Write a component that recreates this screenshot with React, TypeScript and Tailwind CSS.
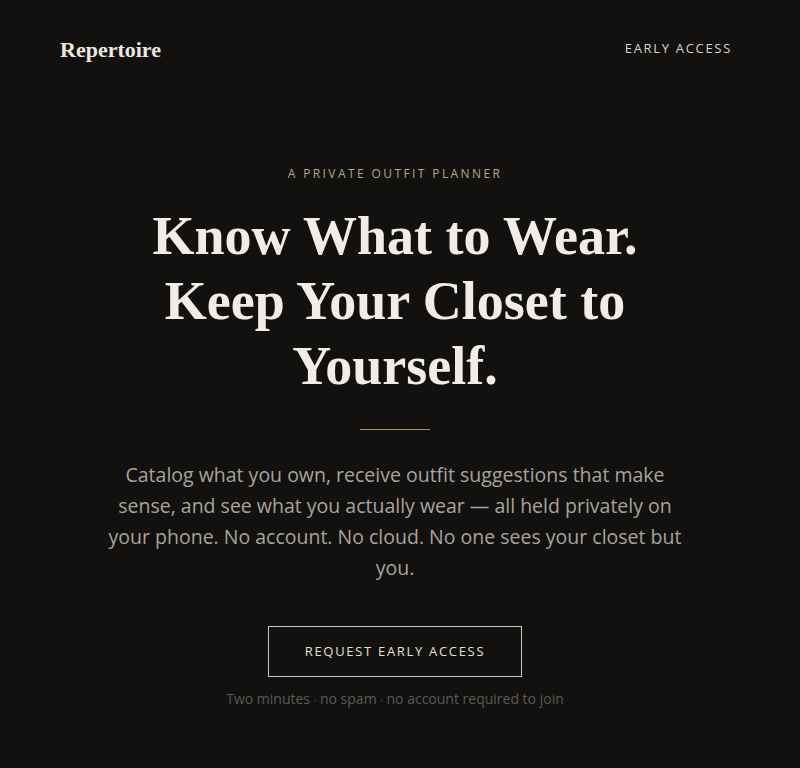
export default function App() {
  return (
    <div className="min-h-screen bg-[#121110] pr-[10px] font-['Open_Sans',sans-serif]">
      {/* Top bar */}
      <header className="flex h-[98px] items-center justify-between pl-[60px] pr-[58px]">
        <span className="font-['Liberation_Serif',serif] text-[22px] font-bold text-[#ece8e0]">Repertoire</span>
        <span className="text-[13px] tracking-[0.13em] text-[#d9d5cd]">EARLY ACCESS</span>
      </header>

      {/* Hero */}
      <main className="flex flex-col items-center pt-[68px] text-center">
        <p className="text-[12px] leading-[16px] tracking-[0.2em] text-[#b3a988]">A PRIVATE OUTFIT PLANNER</p>

        <h1 className="mt-[22px] font-['Liberation_Serif',serif] text-[54px] leading-[65px] font-bold text-[#f1ede6]">
          <span className="block">Know What to Wear.</span>
          <span className="block">Keep Your Closet to</span>
          <span className="block">Yourself.</span>
        </h1>

        <div className="mt-[30px] h-px w-[70px] bg-[#a8936f]" />

        <p className="mt-[29px] max-w-[590px] text-[19.5px] leading-[31px] text-[#a9a49b]">
          Catalog what you own, receive outfit suggestions that make sense, and see what you actually wear — all held
          privately on your phone. No account. No cloud. No one sees your closet but you.
        </p>

        <button className="mt-[43px] h-[51px] w-[254px] border border-[#c9c5bd] text-[13px] tracking-[0.13em] text-[#e4e0d8]">
          REQUEST EARLY ACCESS
        </button>

        <p className="mt-[13px] text-[14px] leading-[18px] text-[#5c5955]">
          Two minutes <span className="text-[10px]">·</span> no spam <span className="text-[10px]">·</span> no account required to join
        </p>
      </main>
    </div>
  );
}
